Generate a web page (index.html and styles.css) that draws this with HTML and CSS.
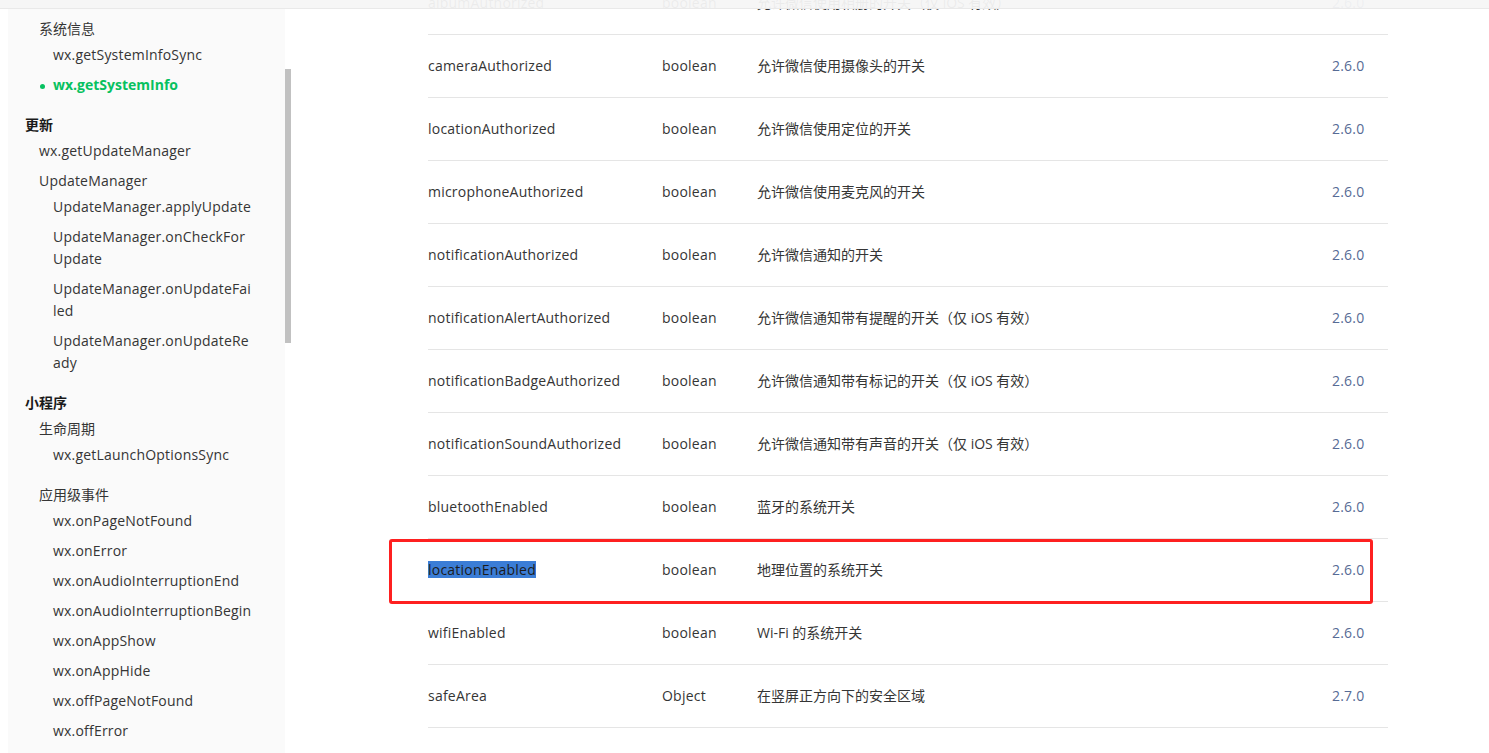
FILE: index.html
```html
<!DOCTYPE html>
<html lang="zh-CN">
<head>
<meta charset="utf-8">
<title>wx.getSystemInfo</title>
<link rel="stylesheet" href="styles.css">
</head>
<body>
<div class="layout">
  <nav class="sidebar">
    <div class="lbl l2 parent zh">系统信息</div>
    <div class="lbl l3">wx.getSystemInfoSync</div>
    <div class="lbl l3 active">wx.getSystemInfo</div>
    <div class="lbl l1 parent gap zh">更新</div>
    <div class="lbl l2">wx.getUpdateManager</div>
    <div class="lbl l2 parent">UpdateManager</div>
    <div class="lbl l3">UpdateManager.applyUpdate</div>
    <div class="lbl l3">UpdateManager.onCheckForUpdate</div>
    <div class="lbl l3">UpdateManager.onUpdateFailed</div>
    <div class="lbl l3">UpdateManager.onUpdateReady</div>
    <div class="lbl l1 parent gap zh">小程序</div>
    <div class="lbl l2 parent zh">生命周期</div>
    <div class="lbl l3">wx.getLaunchOptionsSync</div>
    <div class="lbl l2 parent gap zh">应用级事件</div>
    <div class="lbl l3">wx.onPageNotFound</div>
    <div class="lbl l3">wx.onError</div>
    <div class="lbl l3">wx.onAudioInterruptionEnd</div>
    <div class="lbl l3">wx.onAudioInterruptionBegin</div>
    <div class="lbl l3">wx.onAppShow</div>
    <div class="lbl l3">wx.onAppHide</div>
    <div class="lbl l3">wx.offPageNotFound</div>
    <div class="lbl l3">wx.offError</div>
  </nav>
  <main class="content">
    <div class="table">
      <div class="row"><span class="en">albumAuthorized</span><span class="en">boolean</span><span>允许微信使用相册的开关（仅 iOS 有效）</span><span class="ver en">2.6.0</span></div>
      <div class="row"><span class="en">cameraAuthorized</span><span class="en">boolean</span><span>允许微信使用摄像头的开关</span><span class="ver en">2.6.0</span></div>
      <div class="row"><span class="en">locationAuthorized</span><span class="en">boolean</span><span>允许微信使用定位的开关</span><span class="ver en">2.6.0</span></div>
      <div class="row"><span class="en">microphoneAuthorized</span><span class="en">boolean</span><span>允许微信使用麦克风的开关</span><span class="ver en">2.6.0</span></div>
      <div class="row"><span class="en">notificationAuthorized</span><span class="en">boolean</span><span>允许微信通知的开关</span><span class="ver en">2.6.0</span></div>
      <div class="row"><span class="en">notificationAlertAuthorized</span><span class="en">boolean</span><span>允许微信通知带有提醒的开关（仅 iOS 有效）</span><span class="ver en">2.6.0</span></div>
      <div class="row"><span class="en">notificationBadgeAuthorized</span><span class="en">boolean</span><span>允许微信通知带有标记的开关（仅 iOS 有效）</span><span class="ver en">2.6.0</span></div>
      <div class="row"><span class="en">notificationSoundAuthorized</span><span class="en">boolean</span><span>允许微信通知带有声音的开关（仅 iOS 有效）</span><span class="ver en">2.6.0</span></div>
      <div class="row"><span class="en">bluetoothEnabled</span><span class="en">boolean</span><span>蓝牙的系统开关</span><span class="ver en">2.6.0</span></div>
      <div class="row"><span class="en"><span class="sel">locationEnabled</span></span><span class="en">boolean</span><span>地理位置的系统开关</span><span class="ver en">2.6.0</span></div>
      <div class="row"><span class="en">wifiEnabled</span><span class="en">boolean</span><span>Wi-Fi 的系统开关</span><span class="ver en">2.6.0</span></div>
      <div class="row"><span class="en">safeArea</span><span class="en">Object</span><span>在竖屏正方向下的安全区域</span><span class="ver en">2.7.0</span></div>
    </div>
  </main>
</div>
<header class="topbar"></header>
<div class="scroll-thumb"></div>
<div class="annot"></div>
</body>
</html>
```
FILE: styles.css
```css
html, body {
  margin: 0;
  padding: 0;
  height: 753px;
  overflow: hidden;
  background: #fff;
}
body {
  font-family: "Open Sans", "Noto Sans CJK SC", sans-serif;
  font-size: 14px;
  color: #353535;
}
.layout {
  display: flex;
  height: 753px;
}
.sidebar {
  margin-left: 8px;
  width: 277px;
  flex: none;
  box-sizing: border-box;
  padding: 14px 33px 0 17px;
  background: #fafafa;
  letter-spacing: 0.2px;
}
.lbl {
  position: relative;
  padding: 4px 0;
  line-height: 22px;
  word-break: break-all;
}
.lbl.zh { letter-spacing: 0; }
.lbl.parent { padding-bottom: 0; }
.lbl.gap { margin-top: 10px; }
.l1 { font-weight: bold; color: #1a1a1a; }
.l2 { padding-left: 14px; }
.l3 { padding-left: 28px; }
.active {
  color: #07c160;
  font-weight: bold;
  letter-spacing: 0;
}
.active::before {
  content: "";
  position: absolute;
  left: 15px;
  top: 14px;
  width: 5px;
  height: 5px;
  border-radius: 50%;
  background: #07c160;
}
.content {
  flex: 1;
  padding-left: 143px;
}
.table {
  width: 960px;
  margin-top: -28px;
}
.row {
  display: grid;
  grid-template-columns: 234px 95px 575px 56px;
  align-items: center;
  height: 62px;
  box-sizing: content-box;
  border-bottom: 1px solid #e5e5e5;
}
.row > span {
  white-space: nowrap;
  padding-bottom: 2px;
}
.row > .en { letter-spacing: 0.22px; }
.ver { color: #576b95; }
.sel {
  display: inline-block;
  line-height: 17px;
  background: #3b7dd6;
  color: #1c1c1c;
}
.topbar {
  position: fixed;
  left: 0;
  top: 0;
  width: 100%;
  height: 8px;
  background: rgba(246, 246, 246, 0.95);
  border-bottom: 1px solid #e9e9e9;
}
.scroll-thumb {
  position: absolute;
  left: 285px;
  top: 69px;
  width: 6px;
  height: 274px;
  background: #c1c1c1;
}
.annot {
  position: absolute;
  left: 389px;
  top: 539px;
  width: 984px;
  height: 65px;
  box-sizing: border-box;
  border: 3px solid #fe2020;
  border-radius: 3px;
}
```
